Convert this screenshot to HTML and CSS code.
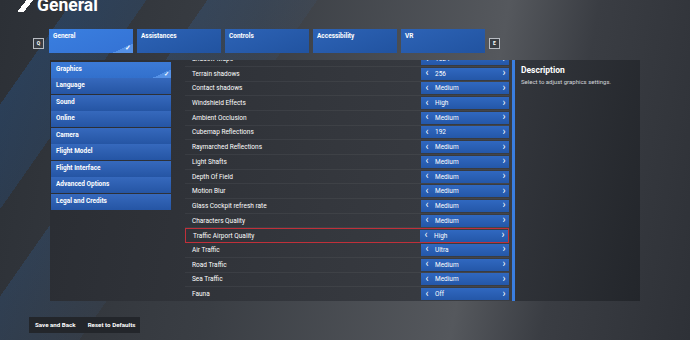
FILE: index.html
```html
<!DOCTYPE html>
<html lang="en">
<head>
  <meta charset="UTF-8">
  <title>General</title>
  <link rel="stylesheet" href="styles.css">
</head>
<body>
  <div class="stripes"></div>

  <header class="header">
    <span class="logo"></span>
    <h1>General</h1>
  </header>

  <nav class="tabs">
    <span class="key">Q</span>
    <div class="tab active">General<span class="corner">&#10003;</span></div>
    <div class="tab">Assistances</div>
    <div class="tab">Controls</div>
    <div class="tab">Accessibility</div>
    <div class="tab">VR</div>
    <span class="key">E</span>
  </nav>

  <main class="content">
    <div class="panel">
      <ul class="menu">
        <li class="active">Graphics<span class="corner">&#10003;</span></li>
        <li>Language</li>
        <li>Sound</li>
        <li>Online</li>
        <li>Camera</li>
        <li>Flight Model</li>
        <li>Flight Interface</li>
        <li>Advanced Options</li>
        <li>Legal and Credits</li>
      </ul>

      <div class="settings">
        <div class="row"><span>Shadow Maps</span><div class="value"><i>&lsaquo;</i>1024<i>&rsaquo;</i></div></div>
        <div class="row"><span>Terrain shadows</span><div class="value"><i>&lsaquo;</i>256<i>&rsaquo;</i></div></div>
        <div class="row"><span>Contact shadows</span><div class="value"><i>&lsaquo;</i>Medium<i>&rsaquo;</i></div></div>
        <div class="row"><span>Windshield Effects</span><div class="value"><i>&lsaquo;</i>High<i>&rsaquo;</i></div></div>
        <div class="row"><span>Ambient Occlusion</span><div class="value"><i>&lsaquo;</i>Medium<i>&rsaquo;</i></div></div>
        <div class="row"><span>Cubemap Reflections</span><div class="value"><i>&lsaquo;</i>192<i>&rsaquo;</i></div></div>
        <div class="row"><span>Raymarched Reflections</span><div class="value"><i>&lsaquo;</i>Medium<i>&rsaquo;</i></div></div>
        <div class="row"><span>Light Shafts</span><div class="value"><i>&lsaquo;</i>Medium<i>&rsaquo;</i></div></div>
        <div class="row"><span>Depth Of Field</span><div class="value"><i>&lsaquo;</i>Medium<i>&rsaquo;</i></div></div>
        <div class="row"><span>Motion Blur</span><div class="value"><i>&lsaquo;</i>Medium<i>&rsaquo;</i></div></div>
        <div class="row"><span>Glass Cockpit refresh rate</span><div class="value"><i>&lsaquo;</i>Medium<i>&rsaquo;</i></div></div>
        <div class="row"><span>Characters Quality</span><div class="value"><i>&lsaquo;</i>Medium<i>&rsaquo;</i></div></div>
        <div class="row selected"><span>Traffic Airport Quality</span><div class="value"><i>&lsaquo;</i>High<i>&rsaquo;</i></div></div>
        <div class="row"><span>Air Traffic</span><div class="value"><i>&lsaquo;</i>Ultra<i>&rsaquo;</i></div></div>
        <div class="row"><span>Road Traffic</span><div class="value"><i>&lsaquo;</i>Medium<i>&rsaquo;</i></div></div>
        <div class="row"><span>Sea Traffic</span><div class="value"><i>&lsaquo;</i>Medium<i>&rsaquo;</i></div></div>
        <div class="row"><span>Fauna</span><div class="value"><i>&lsaquo;</i>Off<i>&rsaquo;</i></div></div>
      </div>
    </div>

    <div class="scrollbar"></div>

    <aside class="description">
      <h2>Description</h2>
      <p>Select to adjust graphics settings.</p>
    </aside>
  </main>

  <footer class="footer">
    <div class="buttons">
      <span>Save and Back</span>
      <span>Reset to Defaults</span>
    </div>
  </footer>
</body>
</html>
```

FILE: styles.css
```css
body {
  margin: 0;
  width: 690px;
  height: 340px;
  overflow: hidden;
  position: relative;
  font-family: Roboto, "Liberation Sans", sans-serif;
  color: #fff;
  background: linear-gradient(100deg, #2c3036 0%, #3a3e44 35%, #55585d 68%, #3a3d43 80%, #2e3137 100%);
}

/* diagonal blue bands behind the header */
.stripes {
  position: absolute;
  left: 0;
  top: 0;
  width: 690px;
  height: 340px;
  background:
    linear-gradient(125deg, transparent 0, transparent 60px, rgba(40, 90, 150, 0.35) 60px, rgba(40, 90, 150, 0.25) 120px, transparent 120px),
    linear-gradient(125deg, transparent 0, transparent 170px, rgba(50, 100, 160, 0.25) 170px, rgba(60, 90, 130, 0.15) 260px, transparent 260px);
  pointer-events: none;
}

.header {
  position: relative;
  height: 28px;
  display: flex;
  align-items: flex-start;
  padding-left: 15px;
}

.logo {
  width: 18px;
  height: 12px;
  background: linear-gradient(128deg, transparent 0 42%, #fff 42% 66%, transparent 66%);
}

.header h1 {
  margin: -3px 0 0 4px;
  font-size: 17.5px;
  font-weight: 700;
  line-height: 17px;
}

.tabs {
  position: relative;
  display: flex;
  align-items: center;
  gap: 4px;
  padding-left: 33px;
  height: 25px;
}

.key {
  width: 9px;
  height: 9px;
  border: 1px solid #b8bcc2;
  background: #3a3e44;
  font-size: 5px;
  font-weight: 700;
  display: flex;
  align-items: center;
  justify-content: center;
  margin-top: 5px;
}

.tabs .key:first-child {
  margin-right: 1px;
}

.tab {
  position: relative;
  width: 76px;
  height: 21px;
  padding: 3px 4px 0;
  font-size: 6.5px;
  font-weight: 700;
  background: linear-gradient(160deg, #2d63b6, #2153a0);
  overflow: hidden;
}

.tab.active {
  background: linear-gradient(160deg, #3a7fe0, #3472d4);
}

.corner {
  position: absolute;
  right: 0;
  bottom: 0;
  width: 22px;
  height: 9px;
  background: linear-gradient(155deg, transparent 50%, #5591e6 50%);
  font-size: 7px;
  line-height: 9px;
  text-align: right;
  padding-right: 2px;
  box-sizing: border-box;
}

.content {
  position: relative;
  display: flex;
  margin: 7px 0 0 50px;
  height: 241px;
}

.panel {
  width: 462px;
  display: flex;
  background: linear-gradient(100deg, #2a2d33, #34373d 60%, #3a3d43);
  overflow: hidden;
}

.menu {
  list-style: none;
  margin: 2px 0 0 1px;
  padding: 0;
  width: 120px;
  display: flex;
  flex-direction: column;
  gap: 0.6px;
}

.menu li {
  position: relative;
  height: 15.9px;
  padding-left: 5px;
  font-size: 6.5px;
  font-weight: 700;
  line-height: 15.9px;
  background: linear-gradient(180deg, #3669bd, #2555a4);
}

.menu li.active {
  background: linear-gradient(180deg, #3c7ad6, #3270cc);
}

.menu .corner {
  width: 20px;
  height: 8px;
  font-size: 6px;
  line-height: 8px;
}

.settings {
  flex: 1;
  margin: -7.8px 3px 0 14px;
}

.row {
  height: 14.7px;
  box-sizing: border-box;
  display: flex;
  align-items: center;
  justify-content: space-between;
  padding-left: 7px;
  border-bottom: 1px solid rgba(255, 255, 255, 0.05);
  font-size: 6.5px;
}

.row.selected {
  border: 1px solid #c0303a;
}

.value {
  width: 88px;
  height: 12px;
  display: flex;
  align-items: center;
  background: linear-gradient(180deg, #3068c0, #2457a8);
  font-size: 6.5px;
}

.value i {
  font-style: normal;
  font-size: 10px;
  line-height: 10px;
  width: 10px;
  text-align: center;
  margin-top: -1px;
}

.value i:first-child {
  margin: -1px 3px 0 1px;
}

.value i:last-child {
  margin-left: auto;
}

.scrollbar {
  width: 3px;
  background: #3a7ee0;
}

.description {
  width: 119px;
  padding: 5px 0 0 6px;
  background: linear-gradient(100deg, #33363c, #23262b);
}

.description h2 {
  margin: 0;
  font-size: 8.5px;
  font-weight: 700;
}

.description p {
  margin: 3px 0 0;
  font-size: 6px;
  color: #d4d6da;
}

.footer {
  position: relative;
  display: flex;
  padding: 16px 0 0 29px;
}

.buttons {
  display: flex;
  gap: 12px;
  height: 16px;
  align-items: center;
  padding: 0 5px 0 6px;
  background: #23262b;
  font-size: 6.2px;
  font-weight: 700;
}
```
